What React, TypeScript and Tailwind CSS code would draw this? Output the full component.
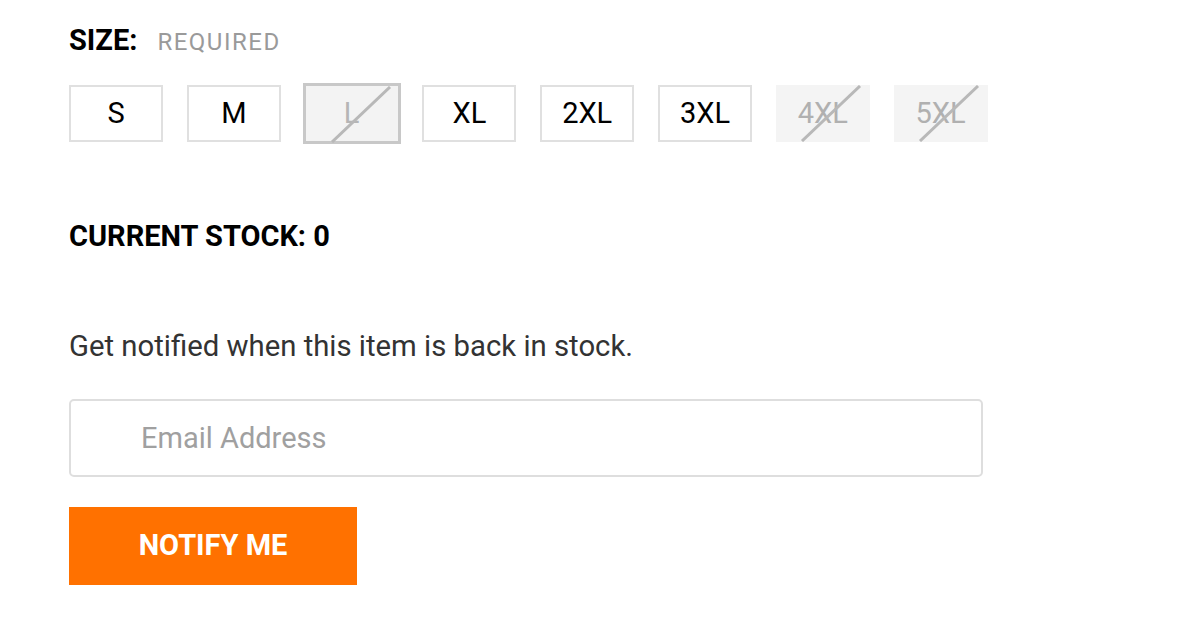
const sizes = [
  { label: 'S', state: 'ok' },
  { label: 'M', state: 'ok' },
  { label: 'L', state: 'selected' },
  { label: 'XL', state: 'ok' },
  { label: '2XL', state: 'ok' },
  { label: '3XL', state: 'ok' },
  { label: '4XL', state: 'out' },
  { label: '5XL', state: 'out' },
]

function Slash() {
  return (
    <svg className="absolute inset-0 pointer-events-none" width="94" height="57" viewBox="0 0 94 57">
      <line x1="26" y1="56" x2="84" y2="1" stroke="#b8b8b8" strokeWidth="3" />
    </svg>
  )
}

export default function App() {
  return (
    <div className="min-h-[625px] bg-white font-['Roboto',sans-serif] pl-[69px] pt-[26px]">
      {/* Size label */}
      <div className="flex items-baseline gap-[20px]">
        <span className="text-[29px] font-bold text-black leading-[28px]">SIZE:</span>
        <span className="text-[24px] tracking-[1.5px] text-[#9a9a9a] leading-[28px]">REQUIRED</span>
      </div>

      {/* Size options */}
      <div className="flex gap-[23.8px] mt-[29px]">
        {sizes.map(s => {
          if (s.state === 'selected') {
            return (
              <div
                key={s.label}
                className="relative w-[94px] h-[57px] flex items-center justify-center border border-[#c8c8c8] ring-2 ring-[#c8c8c8] bg-[#f3f3f3] text-[29px] text-[#b5b5b5]"
              >
                {s.label}
                <Slash />
              </div>
            )
          }
          if (s.state === 'out') {
            return (
              <div
                key={s.label}
                className="relative w-[94px] h-[57px] flex items-center justify-center bg-[#f4f4f4] text-[29px] text-[#b0b0b0]"
              >
                {s.label}
                <Slash />
              </div>
            )
          }
          return (
            <div
              key={s.label}
              className="w-[94px] h-[57px] flex items-center justify-center border-2 border-[#e0e0e0] text-[29px] text-black"
            >
              {s.label}
            </div>
          )
        })}
      </div>

      <div className="mt-[79px] text-[29px] font-bold text-black leading-[30px]">CURRENT STOCK: 0</div>

      <p className="mt-[80px] text-[29.3px] text-[#333] leading-[30px]">Get notified when this item is back in stock.</p>

      <input
        type="email"
        placeholder="Email Address"
        className="mt-[38px] block w-[914px] h-[78px] rounded-[5px] border-2 border-[#dedede] pl-[70px] text-[29px] text-[#333] placeholder:text-[#a0a0a0] outline-none"
      />

      <button className="mt-[30px] w-[288px] h-[78px] bg-[#ff7100] text-white text-[29px] font-bold">
        NOTIFY ME
      </button>
    </div>
  )
}
